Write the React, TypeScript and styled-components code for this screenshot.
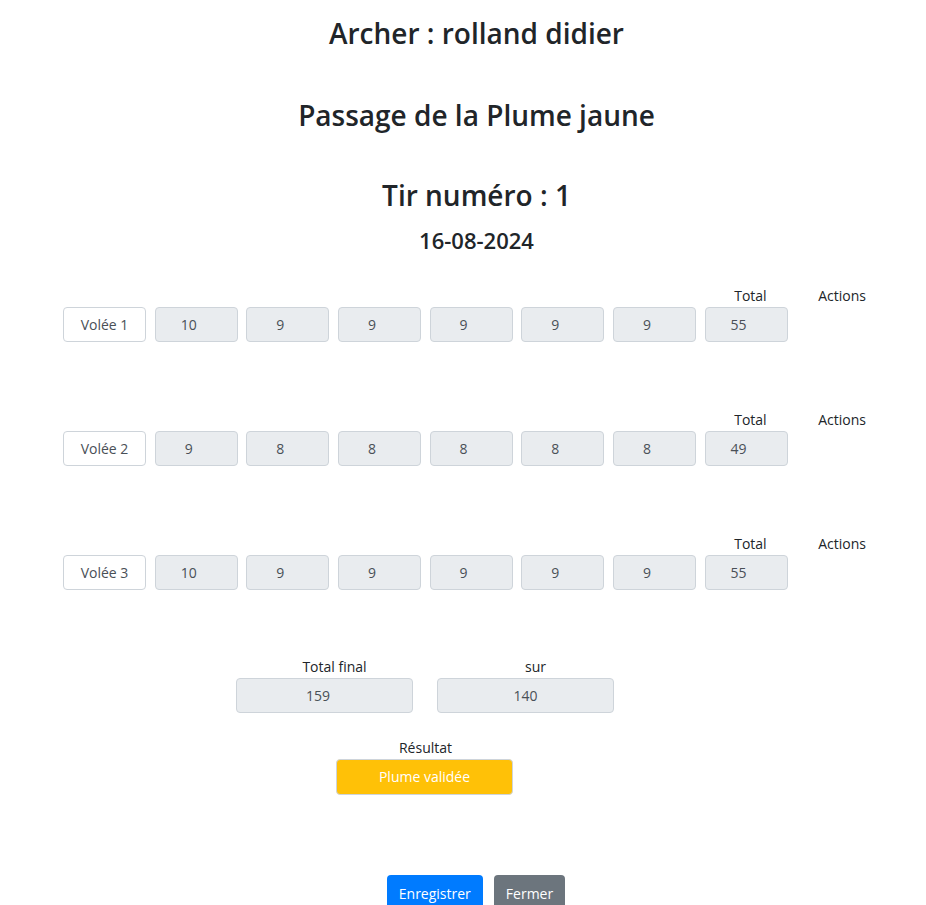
import React from "react";
import styled, { createGlobalStyle } from "styled-components";

const GlobalStyle = createGlobalStyle`
  body {
    margin: 0;
    font-family: "Open Sans", "Noto Sans", sans-serif;
    color: #212529;
    background: #fff;
  }
`;

const volees = [
  { label: "Volée 1", scores: [10, 9, 9, 9, 9, 9], total: 55 },
  { label: "Volée 2", scores: [9, 8, 8, 8, 8, 8], total: 49 },
  { label: "Volée 3", scores: [10, 9, 9, 9, 9, 9], total: 55 },
];

export default function App() {
  return (
    <Page>
      <GlobalStyle />
      <Title $size={28} $top={17} $bottom={48}>
        Archer : rolland didier
      </Title>
      <Title $size={28} $top={0} $bottom={47}>
        Passage de la Plume jaune
      </Title>
      <Title $size={28} $top={0} $bottom={14}>
        Tir numéro : 1
      </Title>
      <Title $size={22} $top={0} $bottom={31}>
        16-08-2024
      </Title>

      {volees.map((v) => (
        <VoleeGrid key={v.label}>
          <HeadCell $col={8}>Total</HeadCell>
          <HeadCell $col={9}>Actions</HeadCell>
          <Field $plain $col={1} value={v.label} readOnly />
          {v.scores.map((s, i) => (
            <Field key={i} $col={i + 2} value={s} readOnly />
          ))}
          <Field $col={8} value={v.total} readOnly />
        </VoleeGrid>
      ))}

      <FinalRow>
        <FinalGroup>
          <FinalLabel>Total final</FinalLabel>
          <WideField $numeric value={159} readOnly />
        </FinalGroup>
        <FinalGroup>
          <FinalLabel>sur</FinalLabel>
          <WideField value={140} readOnly />
        </FinalGroup>
      </FinalRow>

      <ResultRow>
        <FinalGroup>
          <FinalLabel $shift={2}>Résultat</FinalLabel>
          <ResultBox>Plume validée</ResultBox>
        </FinalGroup>
      </ResultRow>

      <Buttons>
        <Btn $bg="#007bff">Enregistrer</Btn>
        <Btn $bg="#6c757d">Fermer</Btn>
      </Buttons>
    </Page>
  );
}

const Page = styled.div`
  width: 926px;
  text-align: center;
`;

const Title = styled.h3<{ $size: number; $top: number; $bottom: number }>`
  font-size: ${(p) => p.$size}px;
  font-weight: 600;
  line-height: 1.2;
  padding-left: 27px;
  margin: ${(p) => p.$top}px 0 ${(p) => p.$bottom}px;
`;

const VoleeGrid = styled.div`
  display: grid;
  grid-template-columns: repeat(9, 91.67px);
  grid-template-rows: 23px 35px;
  padding-left: 58.5px;
  margin-bottom: 66px;
`;

const HeadCell = styled.div<{ $col: number }>`
  grid-row: 1;
  grid-column: ${(p) => p.$col};
  font-size: 14px;
  line-height: 23px;
  padding-left: 9px;
`;

const Field = styled.input<{ $col: number; $plain?: boolean }>`
  grid-row: 2;
  grid-column: ${(p) => p.$col};
  box-sizing: border-box;
  width: 83px;
  height: 35px;
  margin-left: 4.5px;
  padding: 0 ${(p) => (p.$plain ? "0" : "15px")} 0 0;
  border: 1px solid #ced4da;
  border-radius: 4px;
  background: ${(p) => (p.$plain ? "#fff" : "#e9ecef")};
  color: #495057;
  font-family: inherit;
  font-size: 14px;
  text-align: center;
  outline: none;
`;

const FinalRow = styled.div`
  display: flex;
  justify-content: center;
  gap: 24px;
  padding-right: 76px;
  margin-top: 12px;
`;

const FinalGroup = styled.div`
  display: flex;
  flex-direction: column;
  width: 177px;
`;

const FinalLabel = styled.div<{ $shift?: number }>`
  font-size: 14px;
  line-height: 22px;
  padding-left: ${(p) => (p.$shift ?? 20)}px;
`;

const WideField = styled.input<{ $numeric?: boolean }>`
  box-sizing: border-box;
  width: 177px;
  height: 35px;
  padding: 0 ${(p) => (p.$numeric ? "13px" : "0")} 0 0;
  border: 1px solid #ced4da;
  border-radius: 4px;
  background: #e9ecef;
  color: #495057;
  font-family: inherit;
  font-size: 14px;
  text-align: center;
  outline: none;
`;

const ResultRow = styled.div`
  display: flex;
  justify-content: center;
  padding-right: 77px;
  margin-top: 24px;
`;

const ResultBox = styled.div`
  box-sizing: border-box;
  height: 36px;
  border: 1px solid #ced4da;
  border-radius: 4px;
  background: #ffc107;
  color: #fff;
  font-size: 14px;
  line-height: 34px;
`;

const Buttons = styled.div`
  display: flex;
  justify-content: center;
  gap: 11px;
  padding-left: 26px;
  margin-top: 80px;
`;

const Btn = styled.button<{ $bg: string }>`
  background: ${(p) => p.$bg};
  color: #fff;
  border: none;
  border-radius: 4px;
  padding: 6px 12px;
  font-family: inherit;
  font-size: 14px;
  line-height: 26px;
`;
